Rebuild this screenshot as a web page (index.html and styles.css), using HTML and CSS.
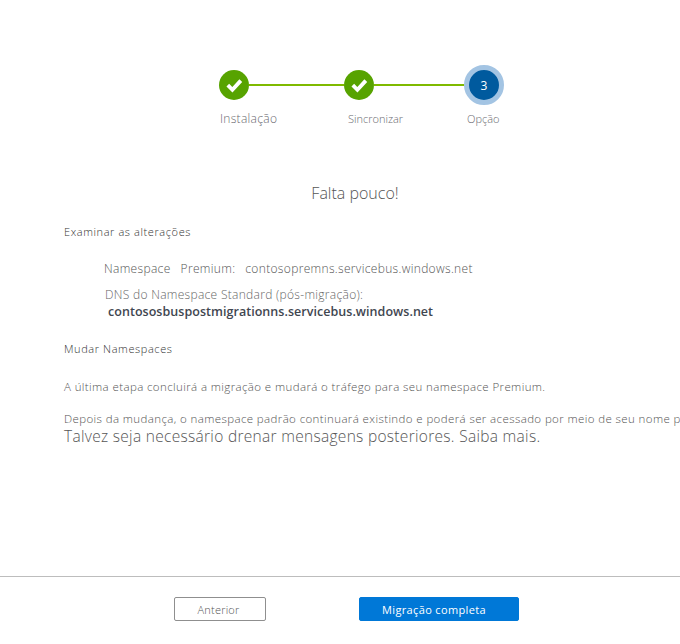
FILE: index.html
```html
<!DOCTYPE html>
<html lang="pt">
<head>
<meta charset="utf-8">
<title>Migração</title>
<link rel="stylesheet" href="styles.css">
</head>
<body>
<div class="page">
  <div class="stepper">
    <div class="track">
      <span class="dot done"><svg viewBox="0 0 30 30" width="30" height="30"><path d="M8.8 15.2l4.6 4.6 8.4-9.2" fill="none" stroke="#fff" stroke-width="3.8"/></svg></span>
      <span class="line"></span>
      <span class="dot done"><svg viewBox="0 0 30 30" width="30" height="30"><path d="M8.8 15.2l4.6 4.6 8.4-9.2" fill="none" stroke="#fff" stroke-width="3.8"/></svg></span>
      <span class="line short"></span>
      <span class="dot current">3</span>
    </div>
    <div class="labels">
      <span class="label large">Instalação</span>
      <span class="label">Sincronizar</span>
      <span class="label">Opção</span>
    </div>
  </div>
  <h1 class="title">Falta pouco!</h1>
  <h2 class="section review">Examinar as alterações</h2>
  <p class="premium"><span>Namespace</span><span>Premium:</span><span>contosopremns.servicebus.windows.net</span></p>
  <p class="dns-label">DNS do Namespace Standard (pós-migração):</p>
  <p class="dns-value">contososbuspostmigrationns.servicebus.windows.net</p>
  <h2 class="section switch">Mudar Namespaces</h2>
  <p class="text first">A última etapa concluirá a migração e mudará o tráfego para seu namespace Premium.</p>
  <p class="text second">Depois da mudança, o namespace padrão continuará existindo e poderá ser acessado por meio de seu nome p</p>
  <p class="note">Talvez seja necessário drenar mensagens posteriores. Saiba mais.</p>
  <footer class="footer">
    <button class="btn secondary">Anterior</button>
    <button class="btn primary">Migração completa</button>
  </footer>
</div>
</body>
</html>
```
FILE: styles.css
```css
* { box-sizing: border-box; }
html, body { margin: 0; padding: 0; background: #fff; }
.page {
  width: 680px;
  height: 644px;
  overflow: hidden;
  display: flex;
  flex-direction: column;
  font-family: "Open Sans", "Noto Sans", sans-serif;
  font-weight: 300;
  color: #6b6b6b;
  white-space: nowrap;
}
.stepper { padding: 65px 0 0 219px; }
.track { display: flex; align-items: center; height: 40px; }
.dot {
  flex: none;
  width: 30px;
  height: 30px;
  border-radius: 50%;
  display: flex;
  align-items: center;
  justify-content: center;
}
.done { background: #57a300; }
.line { flex: none; width: 95px; height: 2px; background: #7fba00; }
.line.short { width: 90px; }
.current {
  width: 40px;
  height: 40px;
  background: #005a9e;
  border: 5px solid #a3c4e3;
  color: #fff;
  font-size: 12px;
  font-weight: 400;
}
.labels { display: grid; grid-template-columns: 128px 119px auto; margin: 5px 0 0 1px; }
.label { font-size: 11px; line-height: 17px; color: #6a6a70; }
.label.large { font-size: 12px; letter-spacing: 0.3px; }
.title {
  margin: 55px 0 0 0;
  width: 710px;
  text-align: center;
  font-size: 16px;
  font-weight: 300;
  line-height: 22px;
  color: #555;
}
.section { margin: 0 0 0 64px; font-size: 11px; font-weight: 300; line-height: 16px; color: #333; letter-spacing: 0.6px; }
.review { margin-top: 20px; }
.premium { margin: 20px 0 0 104px; font-size: 12px; line-height: 17px; color: #555; display: flex; gap: 10px; letter-spacing: 0.33px; }
.dns-label { margin: 10px 0 0 105px; font-size: 12px; line-height: 16px; color: #666; letter-spacing: 0.3px; }
.dns-value { margin: 1px 0 0 108px; font-size: 12.5px; font-weight: 600; line-height: 16px; color: #3f4650; letter-spacing: 0.04px; }
.switch { margin-top: 21px; }
.text { margin: 0 0 0 64px; font-size: 11.5px; line-height: 16px; color: #555; letter-spacing: 0.39px; }
.first { margin-top: 22px; }
.second { margin-top: 16px; }
.note { margin: 0 0 0 64px; font-size: 15.5px; line-height: 18px; color: #555; letter-spacing: 0.3px; }
.footer {
  margin-top: auto;
  height: 68px;
  border-top: 1px solid #bdbdbd;
  padding: 20px 0 0 174px;
  display: flex;
  align-items: flex-start;
  gap: 93px;
}
.btn { height: 24px; padding: 0; border-radius: 2px; font: 300 11px "Open Sans", "Noto Sans", sans-serif; cursor: pointer; }
.secondary { width: 92px; background: #fff; border: 1px solid #8f8f8f; color: #555; padding-right: 3px; letter-spacing: 0.2px; }
.primary { width: 160px; background: #0078d7; border: 1px solid #0078d7; color: #fff; padding-right: 10px; font-weight: 400; letter-spacing: 0.35px; }
```
